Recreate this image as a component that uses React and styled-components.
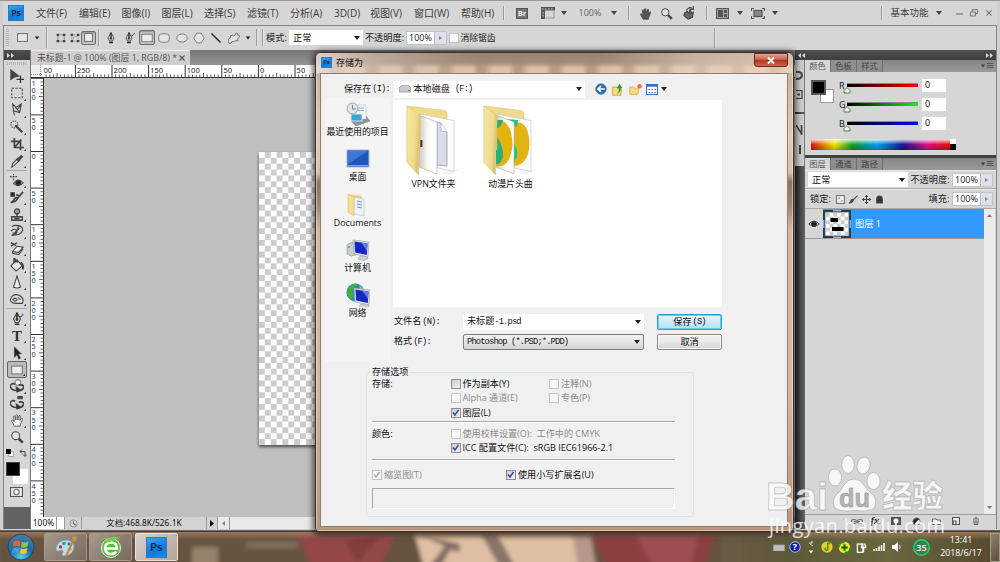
import styled, { createGlobalStyle } from 'styled-components';

const GlobalStyle = createGlobalStyle`
  * { box-sizing:border-box; }
  body {
    margin:0;
    overflow:hidden;
    font-family:"Open Sans", "Noto Sans CJK SC", sans-serif;
    font-size:10px;
    line-height:12px;
    color:#222;
    cursor:default;
  }
  svg { display:block; flex:none; }
`;

//----------------------SHARED-----------------
const Desktop = styled.div`
  position:relative;
  display:flex;
  flex-direction:column;
  width:1000px;
  height:562px;
  overflow:hidden;
  background:#5d4f43;
`;

const Cell = styled.div`
  display:flex;
  flex:none;
  align-items:center;
  justify-content:${props=>props.$left ? 'flex-start' : 'center'};
  width:${props=>props.$w}px;
  white-space:nowrap;
`;

const Fill = styled.div`
  flex:1;
`;

const Sep = styled.div`
  flex:none;
  width:2px;
  height:${props=>props.$h || 14}px;
  border-left:1px solid #9a9a9a;
  border-right:1px solid #e6e6e6;
`;

const Tri = styled.i`
  flex:none;
  width:0;
  height:0;
  border:3px solid transparent;
  border-top:4px solid ${props=>props.$c || '#222'};
  border-bottom:0;
`;

const PsBadge = styled.div`
  display:flex;
  flex:none;
  align-items:center;
  justify-content:center;
  width:${props=>props.$s}px;
  height:${props=>props.$s}px;
  font-size:${props=>props.$s * 0.55}px;
  font-weight:600;
  line-height:1;
  color:#06213f;
  background:linear-gradient(160deg, #3aa5f0, #0f79d8 60%, #1c8ceb);
  border:1px solid #2a7cc2;
`;

//----------------------APP WINDOW-----------------
const AppWindow = styled.div`
  display:flex;
  flex-direction:column;
  height:531px;
  padding:0 3px 1px 3px;
  background:#d0d0d0;
  border-top:1px solid #9c9896;
  border-bottom:1px solid #6a6a6a;
`;

const MenuBar = styled.div`
  display:flex;
  flex:none;
  align-items:center;
  height:24px;
  padding-left:5px;
  background:#d6d6d6;
  color:#3c3c3c;
`;

const OptionsBar = styled.div`
  display:flex;
  flex:none;
  align-items:center;
  height:25px;
  background:#d6d6d6;
  border:1px solid #858585;
  border-bottom:0;
  padding:0 0 1px 2px;
  font-size:9.2px;
`;

const Grip = styled.div`
  flex:none;
  width:${props=>props.$w}px;
  height:${props=>props.$h}px;
  background:repeating-linear-gradient(${props=>props.$dir}, #b4b4b4 0 1px, #d6d6d6 1px 2px);
`;

const Pressed = styled.div`
  display:flex;
  align-items:center;
  justify-content:center;
  width:${props=>props.$w}px;
  height:${props=>props.$h}px;
  background:#c3c3c3;
  border:1px solid #6d6d6d;
  border-radius:2px;
  box-shadow:inset 0 1px 1px #999;
`;

const Select = styled.div`
  display:flex;
  flex:none;
  align-items:center;
  justify-content:space-between;
  width:${props=>props.$w}px;
  height:${props=>props.$h || 15}px;
  padding:0 3px 0 4px;
  background:#fff;
  color:#111;
  white-space:nowrap;
`;

const Spin = styled.div`
  display:flex;
  flex:none;
  align-items:center;
  width:41px;
  height:14px;
  background:#fff;
  border:1px solid #c2c2c8;
  padding-left:2px;
  font-size:9px;
`;

const SpinArrow = styled.div`
  display:flex;
  align-items:center;
  justify-content:center;
  width:12px;
  height:12px;
  margin-left:auto;
  background:#dfe0e8;
  border-left:1px solid #b8b8c4;
  &::after {
    content:'';
    border:2px solid transparent;
    border-left:3px solid #6f86b8;
    border-right:0;
  }
`;

const Workspace = styled.div`
  display:flex;
  flex:1;
  min-height:0;
  border-left:1px solid #858585;
  border-right:1px solid #858585;
`;

//----------------------TOOLBOX-----------------
const Toolbox = styled.div`
  display:flex;
  flex-direction:column;
  flex:none;
  width:27px;
  background:#636363;
  border-right:1px solid #777;
`;

const DarkHead = styled.div`
  display:flex;
  flex:none;
  align-items:center;
  justify-content:${props=>props.$end ? 'flex-end' : 'flex-start'};
  height:10px;
  padding:0 3px;
  background:linear-gradient(#4e4e4e, #3e3e3e);
`;

const ToolList = styled.div`
  display:flex;
  flex-direction:column;
  align-items:center;
  height:447px;
  padding:2px 1px 0 0;
  background:#d6d6d6;
`;

const Tool = styled.div`
  position:relative;
  display:flex;
  flex:none;
  align-items:center;
  justify-content:center;
  width:20px;
  height:16.9px;
  ${props=>props.$more && `
    &::after {
      content:'';
      position:absolute;
      right:1px;
      bottom:1px;
      border:1.5px solid transparent;
      border-right-color:#111;
      border-bottom-color:#111;
    }
  `}
  ${props=>props.$on && `
    background:#bcbcbc;
    border:1px solid #666;
    border-radius:2px;
  `}
`;

const ToolRule = styled.div`
  flex:none;
  width:20px;
  height:1px;
  margin:1px 0;
  background:#aaa;
`;

//----------------------DOCUMENT-----------------
const DocArea = styled.div`
  display:flex;
  flex-direction:column;
  width:764px;
  flex:none;
`;

const TabStrip = styled.div`
  display:flex;
  flex:none;
  height:15px;
  background:linear-gradient(#767676, #949494);
`;

const DocTab = styled.div`
  display:flex;
  align-items:center;
  justify-content:space-between;
  width:159px;
  padding:0 5px 0 6px;
  font-size:8.9px;
  color:#555;
  background:#cfcfcf;
  border-top:1px solid #eee;
  white-space:nowrap;
`;

const DocBody = styled.div`
  display:flex;
  flex:1;
  min-height:0;
`;

const Canvas = styled.div`
  flex:1;
  padding:74px 0 0 214.5px;
  background:#bfbfbf;
`;

const Page = styled.div`
  width:400px;
  height:293px;
  background:repeating-conic-gradient(#ccc 0 25%, #fff 0 50%) 0 0 / 11.72px 11.72px;
  box-shadow:0 2px 3px rgba(0,0,0,.6);
`;

const StatusBar = styled.div`
  display:flex;
  flex:none;
  align-items:center;
  height:12px;
  background:#d2d2d2;
  font-family:"Noto Sans", "Noto Sans CJK SC", sans-serif;
  font-size:8.4px;
  color:#111;
`;

const StatusBox = styled.div`
  display:flex;
  align-items:center;
  justify-content:center;
  width:${props=>props.$w}px;
  height:12px;
  background:${props=>props.$bg || '#d2d2d2'};
  border-right:1px solid #999;
  white-space:nowrap;
`;

//----------------------RIGHT PANELS-----------------
const Dock = styled.div`
  display:flex;
  flex-direction:column;
  flex:none;
  width:10px;
  background:linear-gradient(90deg, #2c2c2c, #636363);
`;

const DockIcons = styled.div`
  display:flex;
  flex-direction:column;
  gap:10px;
  height:52px;
  margin-bottom:2px;
  padding:11px 0 0 1px;
  background:#cdcdcd;
  border-right:1px solid #777;
  overflow:hidden;
`;

const Panels = styled.div`
  display:flex;
  flex-direction:column;
  width:191px;
  font-size:9.2px;
  background:#d6d6d6;
`;

const PanelTabs = styled.div`
  display:flex;
  flex:none;
  align-items:stretch;
  height:12px;
  background:linear-gradient(#858585, #9a9a9a);
`;

const PanelTab = styled.div`
  display:flex;
  align-items:center;
  justify-content:center;
  width:26px;
  font-size:8.2px;
  color:${props=>props.$on ? '#555' : '#444'};
  background:${props=>props.$on ? '#d6d6d6' : '#8f8f8f'};
  border-right:1px solid #6f6f6f;
`;

const PanelMenu = styled.div`
  display:flex;
  align-items:center;
  gap:1px;
  margin-left:auto;
  padding-right:3px;
`;

const ColorBody = styled.div`
  display:flex;
  flex-direction:column;
  height:83px;
  padding:6px 0 0 6px;
`;

const ColorTop = styled.div`
  display:flex;
  height:61px;
`;

const SwatchPair = styled.div`
  position:relative;
  flex:none;
  width:${props=>props.$w}px;
  height:26px;
`;

const Swatch = styled.div`
  position:absolute;
  left:${props=>props.$x}px;
  top:${props=>props.$y}px;
  width:${props=>props.$s}px;
  height:${props=>props.$s}px;
  background:${props=>props.$c};
  border:${props=>props.$b};
`;

const ColorRows = styled.div`
  display:flex;
  flex-direction:column;
  gap:4px;
`;

const ColorRow = styled.div`
  display:flex;
  align-items:center;
  height:15px;
  font-family:"Noto Sans", sans-serif;
  font-size:9px;
`;

const Track = styled.div`
  position:relative;
  width:71px;
  height:4px;
  margin:-2px 3px 0 -1px;
  background:linear-gradient(90deg, #000, ${props=>props.$c});
  border-top:1px solid #888;
`;

const Thumb = styled.svg`
  position:absolute;
  left:-4px;
  top:3px;
`;

const ValueBox = styled.div`
  width:26px;
  height:15px;
  padding-left:3px;
  background:#fff;
  border:1px solid #d8d8e0;
`;

const SpectrumRow = styled.div`
  display:flex;
  height:11px;
`;

const Spectrum = styled.div`
  width:139px;
  background:
    linear-gradient(rgba(255,255,255,.85), rgba(255,255,255,0) 50%, rgba(0,0,0,.25)),
    linear-gradient(90deg, #e01010, #f5e800 17%, #10a030 30%, #00a0e8 48%, #1a1a90 66%, #e0107c 84%, #e01010);
`;

const SpectrumEnd = styled.div`
  width:6px;
  background:linear-gradient(#fff 50%, #000 50%);
`;

const DarkGap = styled.div`
  flex:none;
  height:3px;
  background:#3f4440;
`;

const LayerRow = styled.div`
  display:flex;
  flex:none;
  align-items:center;
  height:${props=>props.$h}px;
  padding:0 3px;
  border-bottom:1px solid #a9a9a9;
  border-top:1px solid #e8e8e8;
`;

const LayerArea = styled.div`
  display:flex;
  flex:1;
  min-height:0;
`;

const LayerItem = styled.div`
  display:flex;
  align-items:center;
  width:179px;
  height:30px;
  border-bottom:1px solid #999;
`;

const LayerName = styled.div`
  display:flex;
  align-items:center;
  gap:4px;
  flex:1;
  height:29px;
  color:#fff;
  background:#3399ff;
`;

const LayerScroll = styled.div`
  display:flex;
  flex-direction:column;
  align-items:center;
  justify-content:space-between;
  width:11px;
  padding:5px 0;
  background:#ececee;
`;

const LayerFoot = styled.div`
  display:flex;
  flex:none;
  align-items:flex-start;
  height:15px;
  padding:1px 0 0 42px;
  border-top:1px solid #999;
  ${Cell} { height:10px; }
`;

//----------------------DIALOG-----------------
const Dialog = styled.div`
  position:absolute;
  left:315px;
  top:52px;
  width:479px;
  height:480px;
  padding:0 5px 4px 4px;
  background:linear-gradient(#c9ab94, #e3c9b6 18%, #dcbfa8 25%, #8b7463 27%, #a08872 32%, #d9b79c 37%, #d9b79c 70%, #b9967a);
  border:1px solid #3a3230;
  border-radius:6px 6px 4px 4px;
  box-shadow:0 1px 6px 2px rgba(0,0,0,.65), inset 0 0 0 1px rgba(255,240,230,.45);
`;

const TitleBar = styled.div`
  display:flex;
  flex:none;
  align-items:center;
  height:20px;
  margin:0 -4px;
  padding:0 4px 1px 5px;
  font-size:9px;
  color:#111;
  border-radius:5px 5px 0 0;
  background:
    linear-gradient(90deg, rgba(232,222,214,.85), rgba(220,205,192,.5) 12%, rgba(160,140,124,0) 32%, rgba(160,140,124,0) 60%, rgba(235,215,200,.55) 80%, rgba(240,215,195,.7)),
    linear-gradient(rgba(150,130,115,1), rgba(160,138,120,.95) 50%, rgba(160,138,120,0) 75%),
    repeating-linear-gradient(90deg, #dcc0a8 0 10px, #b89c86 16px 22px, #dcc0a8 30px 36.6px);
`;

const TitleText = styled.span`
  margin-left:3px;
  padding:0 4px 0 1px;
`;

const CloseButton = styled.div`
  display:flex;
  align-items:center;
  justify-content:center;
  width:34px;
  height:14px;
  margin:-5px 0 0 auto;
  background:linear-gradient(#dda596, #cf6350 45%, #b2301e 50%, #d0664e);
  border:1px solid #6d2a20;
  border-radius:0 0 3px 3px;
`;

const DialogBody = styled.div`
  display:flex;
  flex-direction:column;
  height:454px;
  padding:6px 4px 0 4px;
  background:#f0f0f0;
  border:1px solid #8d7c70;
  font-size:9.1px;
  color:#111;
`;

const LookIn = styled.div`
  display:flex;
  align-items:center;
  height:18px;
`;

const Latin = styled.span`
  margin-left:${props=>props.$gap || 0}px;
  font-family:"Liberation Mono", monospace;
  font-size:8.8px;
  letter-spacing:-.88px;
`;

const Browser = styled.div`
  display:flex;
  gap:3px;
  height:264px;
`;

const Places = styled.div`
  display:flex;
  flex-direction:column;
  width:65px;
  padding-top:4px;
  background:#f4f4f4;
`;

const Place = styled.div`
  display:flex;
  flex-direction:column;
  align-items:center;
  height:45.3px;
  font-size:8.9px;
  white-space:nowrap;
`;

const FileSide = styled.div`
  display:flex;
  flex-direction:column;
`;

const FileList = styled.div`
  display:flex;
  width:329px;
  height:207px;
  margin-top:2px;
  padding:5px 0 0 2px;
  background:#fff;
`;

const Folder = styled.div`
  display:flex;
  flex-direction:column;
  align-items:center;
  width:77px;
  font-size:8.9px;
  svg { margin-bottom:-1px; }
`;

const NameForm = styled.div`
  display:grid;
  grid-template-columns:69px 181px 13px 65px;
  grid-template-rows:17px 17px;
  row-gap:3px;
  margin-top:6px;
  align-items:center;
  padding-left:1px;
`;

const FormatSelect = styled(Select)`
  padding-left:3px;
  background:linear-gradient(#f2f2f2, #e4e4e4 50%, #d3d3d3);
  border:1px solid #7d7d7d;
  border-radius:2px;
`;

const Button = styled.div`
  display:flex;
  align-items:center;
  justify-content:center;
  height:16px;
  grid-column:4;
  border:1px solid ${props=>props.$main ? '#2f9fd0' : '#888'};
  border-radius:2px;
  background:${props=>props.$main ? 'linear-gradient(#e9f6fc, #cdeaf8 50%, #b4def3)' : 'linear-gradient(#f3f3f3, #e8e8e8 50%, #d2d2d2)'};
  box-shadow:${props=>props.$main ? 'inset 0 0 0 1px #5fd0f5' : 'inset 0 0 0 1px #f8f8f8'};
`;

const Options = styled.fieldset`
  display:flex;
  flex-direction:column;
  width:328px;
  height:151px;
  margin:4px 0 0 41px;
  padding:0 18px 0 5px;
  border:1px solid #dbe4ea;
  border-radius:3px;
`;

const Legend = styled.legend`
  margin-left:-1px;
  padding:0 1px;
`;

const OptionLine = styled.div`
  display:grid;
  grid-template-columns:${props=>props.$cols || '78.5px 98.5px 1fr'};
  align-items:center;
  height:14.3px;
  margin-top:${props=>props.$first ? -1 : 0}px;
`;

const OptionRule = styled.div`
  height:2px;
  margin:${props=>props.$m};
  border-top:1px solid #a8a8a8;
  border-bottom:1px solid #fff;
`;

const CheckLabel = styled.div`
  display:flex;
  align-items:center;
  gap:2px;
  white-space:nowrap;
  color:${props=>props.$off ? '#8b8b8b' : '#111'};
`;

const Box = styled.span`
  display:flex;
  flex:none;
  align-items:center;
  justify-content:center;
  width:10px;
  height:10px;
  background:${props=>props.$off ? '#f6f6f6' : 'linear-gradient(135deg, #c8ccd4, #f4f4f6)'};
  border:1px solid ${props=>props.$off ? '#c4c4c4' : '#8e8f8f'};
`;

const Preview = styled.div`
  height:21px;
  margin-top:6px;
  border:1px solid #a8a8a8;
  border-right-color:#fff;
  border-bottom-color:#fff;
`;

//----------------------TASKBAR-----------------
const Taskbar = styled.div`
  position:relative;
  display:flex;
  flex:1;
  align-items:center;
  overflow:hidden;
  border-top:1px solid #4a3c34;
  background:#6a5747;
`;

const Wallpaper = styled.svg`
  position:absolute;
  left:0;
  top:0;
`;

const TaskItems = styled.div`
  position:relative;
  display:flex;
  flex:1;
  align-items:center;
`;

const TaskButton = styled.div`
  display:flex;
  flex:none;
  align-items:center;
  justify-content:center;
  width:43px;
  height:28px;
  margin-right:2.4px;
  border:1px solid ${props=>props.$on ? '#e8e2dc' : '#a89a8e'};
  border-radius:2px;
  background:${props=>props.$on ? 'linear-gradient(135deg, #d8d2cc, #b0a498)' : 'linear-gradient(135deg, #a59a8f, #78695b)'};
`;

const Clock = styled.div`
  width:46px;
  font-size:8.8px;
  line-height:13px;
  text-align:center;
  color:#fff;
`;

const ShowDesktop = styled.div`
  width:10px;
  height:29px;
  margin-left:6px;
  border:1px solid #a59a88;
  background:linear-gradient(135deg, #8e826f, #5a4d3a);
`;

const Watermark = styled.svg`
  position:absolute;
  left:762px;
  top:450px;
`;

//----------------------ICONS-----------------
const Icon = ({ s=14, w, h, box="0 0 16 16", children }) => (
  <svg width={w || s} height={h || s} viewBox={box} fill="none" stroke="#444" strokeWidth="1.2">
    {children}
  </svg>
);

const Pen = () => <><path d="M8 .5 L4 8 L6 12 H10 L12 8 Z" fill="#ddd"/><path d="M8 1 V8 M5.500 14 H10.500" stroke="#222" strokeWidth="1.800"/><circle cx="8" cy="8.500" r="1.200" fill="#222"/></>;
const Hand = ({ fill="#f2f2f2" }) => <path d="M5 15 L2 9.500 Q1.500 8 3 8.200 L5 10 L4 4 Q4.500 2.500 5.700 4 L6.800 8 V2.500 Q7.500 1 8.500 2.500 L9 8 L10.300 3.200 Q11.500 2.200 11.900 3.500 L11.300 8.500 L13 6 Q14.500 5.500 14.300 7 L12 13 L11.500 15 Z" fill={fill} strokeWidth=".9"/>;
const Zoomer = () => <><circle cx="6.500" cy="6.500" r="4.500" fill="#e4e4e4"/><path d="M10 10 L14.500 14.500" strokeWidth="3"/></>;
const Orbit = () => <><path d="M0 8 Q2 4 6 6 M0 8 Q2 14 9 13 M16 9 Q15 6 10 7 M16 9 Q15 12 12 13" strokeWidth="1.900"/><path d="M7 9 L13 13 L8 15 Z" fill="#333"/></>;

const tools = [
  [
    [<><path d="M1 1 V12 L4.500 9.500 L10 8 Z" fill="#444"/><path d="M12 7.500 V16 M7.500 11.800 H16" stroke="#333" strokeWidth="1.500"/></>, false],
    [<rect x="2" y="2.500" width="12" height="11" strokeDasharray="2.500 1.700"/>, true],
    [<path d="M3 1 L7 5 L13 1 L11 11 L4 9 Z M4 9 L5 14 M6 5 L11 10 M13 1 L8 8"/>, true],
    [<><circle cx="5" cy="5" r="4" strokeDasharray="1.500 1.200"/><path d="M6 6 L14 14" strokeWidth="2.600"/></>, true],
    [<path d="M5 1 V12 H16 M1 5 H12 V15 M5 12 L13 3" strokeWidth="1.900"/>, true],
    [<><path d="M2 15 L3 11 L8 6 L10 8 L5 13 Z" fill="#eee"/><path d="M8 5 L11 8 M9.500 6.500 L14 2" strokeWidth="3.400"/></>, true],
  ],
  [
    [<><path d="M0 3 H9 M4 -1 V8" strokeDasharray="2 1"/><path d="M4 11 Q9 4 15 10 Q10 16 4 11 Z" fill="#ddd"/><circle cx="9.500" cy="10" r="3" fill="#222"/></>, true],
    [<><rect x="1" y="2" width="4" height="4" fill="#222"/><path d="M15 1 L8 9 M9 8 Q7 13 1 13 Q5 11 5 9 Q7 7 9 8 M11 6 L7 4" strokeWidth="1.900"/></>, true],
    [<><circle cx="8" cy="4" r="3" fill="#999"/><path d="M8 6 V10 M2 14 V10 H14 V14 Z M5 12 H11" fill="#ccc" strokeWidth="1.600"/></>, true],
    [<path d="M2 3 Q6 0 13 3 Q17 8 10 12 L2 13 Q8 10 10 2 M1 8 Q6 4 8 8 Q8 13 3 10 M11 5 L6 9" strokeWidth="1.300"/>, true],
    [<><path d="M1 2 L7 5 M1 6 L8 2" strokeWidth="1.600"/><path d="M3 12 L8 6 L15 7 L10 13 Z" fill="#eee"/><path d="M3 12 V14 L10 15.500 L15 9"/></>, true],
    [<><path d="M1 9 L8 2 L14 9 L7 15 Z" fill="#e4e4e4"/><path d="M5 6 V1 L9 5 M12 5 Q16 8 14.500 13" strokeWidth="2.400"/></>, true],
    [<path d="M8 1 L4 14 Q8 15.500 12 14 Z" fill="#ececec"/>, true],
    [<><path d="M1 7 Q4 1 11 4 Q17 8 14 13 H6 Q-1 12 1 7 Z" fill="#ddd"/><path d="M3 9 Q6 5 8 9 Q5 12 4 9 M9 6 L12 9"/></>, true],
  ],
  [
    [<><Pen/><path d="M10 5 Q13 7 15 2"/></>, true],
    [<text x="8" y="14" textAnchor="middle" fontFamily="Liberation Serif, serif" fontSize="17" fontWeight="700" fill="#333" stroke="none">T</text>, true],
    [<path d="M5 1 V13 L8 10 L10 15 L12 14 L9.500 9 H13 Z" fill="#222" strokeWidth=".7"/>, true],
    [<rect x="2" y="3.500" width="12" height="9" fill="#ececec" stroke="#777"/>, true, true],
    [<><circle cx="9" cy="4" r="3.300" fill="#eee" stroke="#888"/><Orbit/></>, true],
    [<><rect x="9" y="0" width="5" height="3" fill="#444"/><Orbit/></>, true],
    [<Hand/>, true],
    [<Zoomer/>, false],
  ],
];

const shapes = [
  [14, <Pen/>],
  [21, <><Pen/><path d="M11 4 Q13 7 15.500 1"/></>],
  [16, <rect x="1" y="3" width="14" height="10" fill="#ececec" stroke="#777"/>, true],
  [18, <rect x="1" y="2.500" width="14" height="11" rx="3.500" fill="#e4e4e4" stroke="#777"/>],
  [17, <ellipse cx="8" cy="8" rx="7" ry="5.500" fill="#e4e4e4" stroke="#777"/>],
  [17, <path d="M5 1.500 H11 L15 8 L11 14.500 H5 L1 8 Z" fill="#e4e4e4" stroke="#777"/>],
  [18, <path d="M2 2 L14 14" stroke="#222" strokeWidth="1.800"/>],
  [18, <path d="M1 15 Q-1 9 3 8 Q2 4 6 4 Q8 8 10 2 Q13 0 13 4 Q17 4 15 7 Q12 8 13 12 Q9 10 8 13 Q5 11 4 15 Z" fill="#e0e0e0" stroke="#666"/>],
];

const menus = [
  [43, '文件(F)'], [42.5, '编辑(E)'], [40, '图像(I)'], [42.5, '图层(L)'], [43, '选择(S)'], [43, '滤镜(T)'],
  [44, '分析(A)'], [36, '3D(D)'], [44, '视图(V)'], [47, '窗口(W)'], [42, '帮助(H)'],
];

const Chevrons = ({ back }) => (
  <Icon w={7} h={5} box="0 0 7 5">
    <path d={back ? "M3 0 L0 2.500 L3 5 Z M7 0 L4 2.500 L7 5 Z" : "M0 0 L3 2.500 L0 5 Z M4 0 L7 2.500 L4 5 Z"} fill="#ddd" stroke="none"/>
  </Icon>
);

const SmallTri = styled(Tri)`
  transform:scale(.75);
`;

const BurgerMenu = () => (
  <PanelMenu>
    <SmallTri $c="#444"/>
    <Icon w={6} h={6} box="0 0 6 6"><path d="M0 .5 H6 M0 2.500 H6 M0 4.500 H6" stroke="#555" strokeWidth="1"/></Icon>
  </PanelMenu>
);

const Eye = () => <Icon s={12}><path d="M1 8 Q8 0 15 8 Q8 14 1 8 Z" fill="#ddd"/><circle cx="8" cy="8" r="3.500" fill="#222"/></Icon>;

//----------------------RULERS-----------------
const STEP = 36.6;

const TopRuler = () => {
  const labels = ['250', '200', '150', '100', '50', '0', '50'];
  const ticks = [];
  for (let i = -9; i < 76; i++) {
    const x = 44.400 + i * STEP / 10;
    ticks.push(<path key={i} d={`M${x} ${i % 10 === 0 ? 0 : i % 5 === 0 ? 8 : 9.500} V12`} stroke="#333" strokeWidth={i % 10 === 0 ? 1 : .8}/>);
  }
  return (
    <svg width="764" height="13" fontFamily="Noto Sans, sans-serif" fontSize="7.500" fill="#222">
      <rect width="764" height="13" fill="#fff"/>
      {ticks}
      <text x="12.500" y="7.500">00</text>
      {labels.map((t, i) => <text key={i} x={46 + i * STEP} y="7.500">{t}</text>)}
      <path d="M0 12.500 H764" stroke="#333"/>
      <rect width="12" height="12" fill="#eee"/>
      <path d="M0 9.500 H12 M9.500 0 V12" stroke="#888" strokeDasharray="1 1"/>
    </svg>
  );
};

const SideRuler = () => {
  const labels = ['100', '50', '0', '50', '100', '150', '200', '250', '300', '350', '400', '450'];
  const ticks = [];
  for (let i = 0; i < 121; i++) {
    const y = .3 + i * STEP / 10;
    ticks.push(<path key={i} d={`M${i % 10 === 0 ? 0 : i % 5 === 0 ? 8 : 9.500} ${y} H12`} stroke="#333" strokeWidth={i % 10 === 0 ? 1 : .8}/>);
  }
  return (
    <svg width="13" height="439" fontFamily="Noto Sans, sans-serif" fontSize="7.300" fill="#246">
      <rect width="13" height="439" fill="#fff"/>
      {ticks}
      {labels.map((t, i) => t.split('').map((d, j) => (
        <text key={`${i}-${j}`} x=".6" y={8 + i * STEP + j * 7.200}>{d}</text>
      )))}
      <path d="M12.500 0 V439" stroke="#333"/>
    </svg>
  );
};

//----------------------DIALOG PARTS-----------------
const FolderIcon = ({ fruit }) => (
  <svg width="56" height="74" viewBox="0 0 56 74">
    <defs>
      <linearGradient id="flap" x1="0" x2="1" y1="0" y2=".3">
        <stop offset="0" stopColor="#f8e7a6"/><stop offset=".7" stopColor="#f1db8c"/><stop offset="1" stopColor="#dcc270"/>
      </linearGradient>
      <linearGradient id="sheet" x1="0" x2="1">
        <stop offset="0" stopColor="#cfc8bc"/><stop offset=".5" stopColor="#fbfaf8"/><stop offset="1" stopColor="#fff"/>
      </linearGradient>
    </defs>
    <path d="M36 68 L55 63 L44 70 Z" fill="#f1f1f1"/>
    <path d="M1 1 L38 5.500 Q41 6 41 9 V30 H14 Z" fill="#efd98a" stroke="#dcc474" strokeWidth=".6"/>
    <path d="M14 9 L48 15.500 V66.500 L32 63 Z" fill="#fdfdfd" stroke="#c4c4c4" strokeWidth=".7"/>
    {fruit ? <>
      <path d="M31 18 Q46 14 46.500 40 Q45 60 31 61 Z" fill="#e3b410"/>
      <path d="M22 14 L35 15 L34 22 Z M31 39 Q38 48 31 57 Z" fill="#1fc47b"/>
    </> : <>
      <path d="M31 17 L35 18 L41 27 V61 L31 60 Z" fill="#d9deea" stroke="#9a9a9a" strokeWidth=".8"/>
      <path d="M35 18 V26 L41 27" fill="#fff" stroke="#9a9a9a" strokeWidth=".6"/>
    </>}
    <path d="M13 10 L31 17 V69 L13 62 Z" fill="url(#sheet)" stroke="#b5b5b5" strokeWidth=".7"/>
    {fruit ? <>
      <path d="M13 15 Q29 14 29.500 40 Q27 64 13 61 Z" fill="#e3b410"/>
      <path d="M13 15 H20 Q19 22 13 24 Z M13 30 Q21 42 20 52 Q18 60 13 59 Z" fill="#2fae72"/>
    </> : <path d="M14 35 H16.500 V42 H14 Z" fill="#642c5c"/>}
    <path d="M.8 1 L14 10 V44 L12.500 46 V70 L.8 57 Z" fill="url(#flap)" stroke="#d9c27a" strokeWidth=".6"/>
  </svg>
);

const Monitor = ({ x=0, y=0 }) => (
  <g transform={`translate(${x} ${y})`}>
    <path d="M7 16 L14 16 L15 19 Q10 22 5 19 Z" fill="#cfd3d6" stroke="#999" strokeWidth=".5"/>
    <path d="M0 0 L16 2 L15 17 L1 14 Z" fill="#dfe3e8" stroke="#999" strokeWidth=".6"/>
    <path d="M1.500 1.500 L14.500 3.500 L13.800 15 L2.200 12.500 Z" fill="#1428c8"/>
    <path d="M8 2.500 L14.500 3.500 L14 11 Z" fill="#5c7cf0"/>
  </g>
);

const places = [
  ['最近使用的项目', <>
    <path d="M5 19 L20 14 L24 19 L10 24 Z" fill="#8d9499" stroke="#7f888d" strokeWidth=".6"/>
    <rect x="7" y="3" width="13" height="14" fill="#f3f6f8" stroke="#b1bbc4" strokeWidth=".6"/>
    <path d="M12 6 H18 M12 8.500 H18" stroke="#6f9cc8" strokeWidth=".8"/>
    <rect x="5" y="12" width="11" height="7" fill="#3ba5d5" stroke="#eee" strokeWidth=".8"/>
    <circle cx="6.500" cy="6.500" r="5.500" fill="#dbe6ee" stroke="#98a6b0"/><path d="M6.500 3 V7 H10" stroke="#667" fill="none" strokeWidth=".8"/>
  </>],
  ['桌面', <>
    <rect x="1" y="3" width="22" height="17" fill="#1f56b8" stroke="#a9bad0"/>
    <path d="M2 4 H22 L2 17 Z" fill="#3f76d8"/><path d="M2 18.500 H22" stroke="#7fa6d8"/>
  </>],
  ['Documents', <>
    <path d="M2 1 L16 3 V20 H7 Z" fill="#ecd47a"/><path d="M8 4 L18 6 V23 L8 21 Z" fill="#eef3f8" stroke="#b5bcc4" strokeWidth=".6"/>
    <path d="M11 8 L16 9 M11 11 L16 12 M11 14 L16 15" stroke="#6b94bd"/>
    <path d="M2 1 L8 4 V23 L2 19 Z" fill="#f3df93" stroke="#d6bf6c" strokeWidth=".6"/>
  </>],
  ['计算机', <><path d="M1 7 L6 4 L10 6 V17 L5 18 L1 16 Z" fill="#c8ccd0" stroke="#8c9298" strokeWidth=".6"/><path d="M3 8 V10" stroke="#2c2" strokeWidth="1.500"/><Monitor x={7} y={2}/></>],
  ['网络', <><circle cx="9.500" cy="9.500" r="9" fill="#2b80cf"/><path d="M2 5 Q6 0 12 1 Q9 5 6 7 Q9 10 7 14 Q5 18 4 16 Q-1 11 2 5 Z" fill="#3fae3a"/><path d="M13 2 Q18 5 18 9 L14 6 Z" fill="#7bd04d"/><Monitor x={8} y={5}/></>],
];

const Check = ({ on, off, children }) => (
  <CheckLabel $off={off}>
    <Box $off={off}>
      {on && <Icon s={8} box="0 0 8 8"><path d="M1 3.500 L3 6 L6.500 .8" stroke={off ? '#aaa' : '#2d49a0'} strokeWidth="1.500"/></Icon>}
    </Box>
    {children}
  </CheckLabel>
);

const LookLabel = styled(Cell)`
  padding-left:19px;
`;

const SaveDialog = () => (
  <Dialog>
    <TitleBar>
      <PsBadge $s={11}>Ps</PsBadge>
      <TitleText>存储为</TitleText>
      <CloseButton>
        <Icon w={8} h={7} box="0 0 8 7"><path d="M1 .5 L7 6.500 M7 .5 L1 6.500" stroke="#fff" strokeWidth="2"/></Icon>
      </CloseButton>
    </TitleBar>
    <DialogBody>
      <LookIn>
        <LookLabel $w={68.500} $left>保存在<Latin $gap={1}>(I):</Latin></LookLabel>
        <Select $w={191} $h={17}>
          <Cell $w={14}>
            <Icon w={12} h={8} box="0 0 12 8"><path d="M0 3 L3 0 H9 L12 3 V7 H0 Z" fill="#c9ccd0" stroke="#888" strokeWidth=".7"/><path d="M9 5.500 H11" stroke="#2b2"/></Icon>
          </Cell>
          <Cell $left $w={160}>本地磁盘<Latin $gap={5}>(F:)</Latin></Cell>
          <Tri/>
        </Select>
        <Cell $w={9}/>
        <Cell $w={15}><Icon s={12}><circle cx="8" cy="8" r="7" fill="#2470b5" stroke="#5a7c9c"/><path d="M13 8 H4 M8 4 L4 8 L8 12" stroke="#fff" strokeWidth="2.200"/></Icon></Cell>
        <Cell $w={18}><Icon s={13}><path d="M2 5 H7 L8 7 H13 L12 15 H2 Z" fill="#f3dc84" stroke="#c9a94a"/><path d="M6 13 Q11 11 9.500 6 H7 L10.500 1 L14 6 H12 Q13 12 6 13 Z" fill="#2f9e34" stroke="none"/></Icon></Cell>
        <Cell $w={17}><Icon s={13}><path d="M1 5 H6 L7 7 H12 L11 14 H1 Z" fill="#f3dc84" stroke="#d9bb5a"/><circle cx="13" cy="4" r="2.800" fill="#f07030" stroke="none"/></Icon></Cell>
        <Cell $w={17}><Icon w={12} h={11} box="0 0 12 11"><rect x=".5" y=".5" width="11" height="10" fill="#fff" stroke="#2c74c8"/><path d="M0 1.500 H12" stroke="#2c74c8" strokeWidth="2.500"/><path d="M2.500 5.500 H10 M2.500 8.500 H10" stroke="#47a" strokeDasharray="1.500 1.400"/></Icon></Cell>
        <Tri/>
      </LookIn>
      <Browser>
        <Places>
          {places.map(([name, art]) => (
            <Place key={name}>
              <svg width="24" height="24" viewBox="0 0 24 24">{art}</svg>
              {name}
            </Place>
          ))}
        </Places>
        <FileSide>
          <FileList>
            <Folder><FolderIcon/>VPN文件夹</Folder>
            <Folder><FolderIcon fruit/>动漫片头曲</Folder>
          </FileList>
          <NameForm>
            <span>文件名<Latin $gap={1}>(N):</Latin></span>
            <Select $w={181} $h={16}><span>未标题<Latin>-1.psd</Latin></span><Tri/></Select>
            <Button $main>保存<Latin $gap={1}>(S)</Latin></Button>
            <span>格式<Latin $gap={1}>(F):</Latin></span>
            <FormatSelect $w={181} $h={16}><Latin>Photoshop (*.PSD;*.PDD)</Latin><Tri/></FormatSelect>
            <Button>取消</Button>
          </NameForm>
        </FileSide>
      </Browser>
      <Options>
        <Legend>存储选项</Legend>
        <OptionLine $first><span>存储:</span><Check>作为副本(Y)</Check><Check off>注释(N)</Check></OptionLine>
        <OptionLine><span/><Check off>Alpha 通道(E)</Check><Check off>专色(P)</Check></OptionLine>
        <OptionLine><span/><Check on>图层(L)</Check></OptionLine>
        <OptionRule $m="1px 0 4px"/>
        <OptionLine><span>颜色:</span><Check off>使用校样设置(O):&nbsp; 工作中的 CMYK</Check></OptionLine>
        <OptionLine><span/><Check on>ICC 配置文件(C):&nbsp; sRGB IEC61966-2.1</Check></OptionLine>
        <OptionRule $m="3.500px 0 6.500px"/>
        <OptionLine $cols="134px 1fr"><Check on off>缩览图(T)</Check><Check on>使用小写扩展名(U)</Check></OptionLine>
        <Preview/>
      </Options>
    </DialogBody>
  </Dialog>
);

//----------------------BARS-----------------
const ZoomLevel = styled(Cell)`
  font-size:9px;
  color:#666;
`;

const TopMenu = () => (
  <MenuBar>
    <PsBadge $s={16}>Ps</PsBadge>
    <Cell $w={12}/>
    {menus.map(([w, name]) => <Cell key={name} $left $w={w}>{name}</Cell>)}
    <Sep/>
    <Cell $w={33}><Icon w={12} h={11} box="0 0 12 11"><rect x=".5" y=".5" width="11" height="10" fill="#777" stroke="#555"/><text x="6" y="8.300" textAnchor="middle" fontSize="7.500" fontWeight="700" fill="#eee" stroke="none">Br</text></Icon></Cell>
    <Cell $w={20}><Icon w={14} h={12} box="0 0 14 12"><path d="M0 0 H14 V3.500 H4 V12 H0 Z" fill="#555" stroke="none"/><path d="M4.500 3.500 H13 V11 H4.500" stroke="#999" strokeWidth="1"/><path d="M1 2 H13 M2 5 V11" stroke="#ddd" strokeDasharray="1.500 1.500" strokeWidth="1"/></Icon></Cell>
    <Cell $w={12}><Tri $c="#444"/></Cell>
    <ZoomLevel $w={40}>100%</ZoomLevel>
    <Cell $w={8}><Tri $c="#444"/></Cell>
    <Cell $w={10}/>
    <Sep/>
    <Cell $w={31}><Icon s={13}><Hand fill="#555"/></Icon></Cell>
    <Cell $w={11}><Icon s={13}><Zoomer/></Icon></Cell>
    <Cell $w={34}><Icon s={14}><path d="M3 8 L6 6 L8 9 L9 4 L11 8 L13 7 L12 13 L7 15 L2 11 Z" fill="#666"/><path d="M5 5 Q8 0 12 3 M13 0 V4 H9"/></Icon></Cell>
    <Sep/>
    <Cell $w={29}><Icon w={13} h={11} box="0 0 13 11"><rect x=".5" y=".5" width="12" height="10" fill="#aaa" stroke="#555"/><path d="M2 2 H7 V9 H2 Z M8 2 H11 V5 H8 Z M8 6 H11 V9 H8 Z" fill="#555" stroke="none"/></Icon></Cell>
    <Tri $c="#444"/>
    <Cell $w={29}><Icon w={14} h={11} box="0 0 14 11"><rect x="3" y="2.500" width="8" height="6" fill="#888" stroke="#555"/><path d="M.5 3 V.5 H3 M11 .5 H13.500 V3 M13.500 8 V10.500 H11 M3 10.500 H.5 V8" stroke="#555"/></Icon></Cell>
    <Tri $c="#444"/>
    <Fill/>
    <Sep/>
    <Cell $w={53} style={{ fontSize: 9.5 }}>基本功能</Cell>
    <Tri $c="#444"/>
    <Cell $w={9}/>
    <Cell $w={16}><Icon w={7} h={7} box="0 0 7 7"><path d="M0 4 H7" stroke="#777"/></Icon></Cell>
    <Cell $w={13}><Icon w={8} h={8} box="0 0 8 8"><path d="M2 2.500 V.7 H7.500 V4.500 H6 M.5 3 H5.500 V7 H.5 Z" stroke="#777" strokeWidth="1"/></Icon></Cell>
    <Cell $w={17}><Icon w={6} h={6} box="0 0 7 7"><path d="M.5 .5 L6.500 6.500 M6.500 .5 L.5 6.500" stroke="#777"/></Icon></Cell>
  </MenuBar>
);

const ToolOptions = () => (
  <OptionsBar>
    <Grip $w={3} $h={17} $dir="0deg"/>
    <Cell $w={26}><Icon w={11} h={9} box="0 0 11 9"><rect x=".5" y=".5" width="10" height="8" fill="#e6e6e6" stroke="#777"/></Icon></Cell>
    <Cell $w={4}><SmallTri/></Cell>
    <Cell $w={7}/>
    <Sep $h={21}/>
    <Cell $w={5}/>
    <Cell $w={15}><Icon s={10}><rect x="3" y="3" width="10" height="10" stroke="#777"/><path d="M1 3 H5 M11 3 H15 M1 13 H5 M11 13 H15" strokeWidth="3.500"/></Icon></Cell>
    <Cell $w={13}><Icon s={10}><path d="M3 3 H13 V13 H3 Z M5 10 Q5 5 11 6" stroke="#777" strokeDasharray="2 1"/><path d="M1 3 H5 M11 3 H15 M1 13 H5 M11 13 H15" strokeWidth="3.500"/></Icon></Cell>
    <Pressed $w={15} $h={14}><Icon s={9} box="0 0 9 9"><rect x=".5" y=".5" width="8" height="8" fill="#eee" stroke="#777"/></Icon></Pressed>
    <Cell $w={2}/>
    <Sep $h={17}/>
    <Cell $w={4}/>
    {shapes.map(([w, art, on], i) => (
      <Cell key={i} $w={w}>{on ? <Pressed $w={18} $h={15}><Icon s={12}>{art}</Icon></Pressed> : <Icon s={12}>{art}</Icon>}</Cell>
    ))}
    <Cell $w={9}><SmallTri/></Cell>
    <Cell $w={4}/>
    <Sep $h={17}/>
    <Cell $w={4}/>
    <Sep $h={17}/>
    <Cell $w={25}>模式:</Cell>
    <Select $w={74}>正常<Tri/></Select>
    <Cell $w={43}>不透明度:</Cell>
    <Spin>100%<SpinArrow/></Spin>
    <Cell $w={2}/>
    <Box $off/>
    <Cell $w={38} style={{ fontSize: 8.8 }}>消除锯齿</Cell>
    <Cell $w={217}/>
    <Sep $h={20}/>
  </OptionsBar>
);

const MiniRow = styled(Cell)`
  gap:5px;
  height:15px;
`;

const ToolBar = () => (
  <Toolbox>
    <DarkHead><Chevrons/></DarkHead>
    <ToolList>
      <Grip $w={20} $h={3} $dir="90deg"/>
      <Cell $w={20} style={{ height: 3 }}/>
      {tools.map((group, g) => (
        <div key={g}>
          {g > 0 && <ToolRule/>}
          {group.map(([art, more, on], i) => <Tool key={i} $more={more} $on={on}><Icon s={14}>{art}</Icon></Tool>)}
        </div>
      ))}
      <MiniRow $w={22}>
        <Icon s={8} box="0 0 8 8"><rect x="3" y="3" width="4.500" height="4.500" fill="#fff" stroke="#888" strokeWidth=".7"/><rect width="5" height="5" fill="#000" stroke="none"/></Icon>
        <Icon s={8} box="0 0 8 8"><path d="M1 2.500 H6 V7 M3 .5 L1 2.500 L3 4.500 M4 5.500 L6 7.500 L8 5.500" strokeWidth="1"/></Icon>
      </MiniRow>
      <SwatchPair $w={22}>
        <Swatch $x={7} $y={8} $s={15} $c="#fff" $b="0"/>
        <Swatch $x={0} $y={1} $s={14} $c="#000" $b="1px solid #444"/>
      </SwatchPair>
      <Icon w={13} h={10} box="0 0 13 10"><rect x=".5" y=".5" width="12" height="9" fill="#eee" stroke="#555"/><circle cx="6.500" cy="5" r="2.700" fill="#fff" stroke="#777"/></Icon>
    </ToolList>
  </Toolbox>
);

const Document = () => (
  <DocArea>
    <TabStrip>
      <DocTab>未标题-1 @ 100% (图层 1, RGB/8) *
        <Icon s={6} box="0 0 6 6"><path d="M.5 .5 L5.500 5.500 M5.500 .5 L.5 5.500" stroke="#555"/></Icon>
      </DocTab>
    </TabStrip>
    <TopRuler/>
    <DocBody>
      <SideRuler/>
      <Canvas><Page/></Canvas>
    </DocBody>
    <StatusBar>
      <StatusBox $w={26} $bg="#fff">100%</StatusBox>
      <StatusBox $w={8} $bg="#fff"/>
      <StatusBox $w={17}><Icon s={9}><circle cx="8" cy="8" r="6.500" stroke="#777"/><path d="M8 4 V8 L12 11" stroke="#777" strokeWidth="2"/></Icon></StatusBox>
      <StatusBox $w={125}>文档:468.8K/526.1K</StatusBox>
      <StatusBox $w={11}><Icon w={4} h={7} box="0 0 4 7"><path d="M0 0 L4 3.500 L0 7 Z" fill="#111" stroke="none"/></Icon></StatusBox>
      <StatusBox $w={12} $bg="#e9e9e9"><Icon w={3} h={5} box="0 0 3 5"><path d="M3 0 L0 2.500 L3 5 Z" fill="#888" stroke="none"/></Icon></StatusBox>
      <StatusBox $w={565} $bg="#e9e9e9"/>
    </StatusBar>
  </DocArea>
);

const ColorPanel = () => (
  <>
    <PanelTabs>
      <PanelTab $on>颜色</PanelTab><PanelTab>色板</PanelTab><PanelTab>样式</PanelTab>
      <BurgerMenu/>
    </PanelTabs>
    <ColorBody>
      <ColorTop>
        <SwatchPair $w={28}>
          <Swatch $x={9} $y={11} $s={14} $c="#fff" $b="1px solid #999"/>
          <Swatch $x={0} $y={2} $s={15} $c="#000" $b="2px solid #555"/>
        </SwatchPair>
        <ColorRows>
          {[['R', '#f00'], ['G', '#0f0'], ['B', '#00f']].map(([name, c]) => (
            <ColorRow key={name}>
              <Cell $w={9} $left>{name}</Cell>
              <Track $c={c}>
                <Thumb width="8" height="7" viewBox="0 0 8 7"><path d="M4 .5 L7 3.500 V6 H1 V3.500 Z" fill="#fff" stroke="#3c8a3c"/></Thumb>
              </Track>
              <ValueBox>0</ValueBox>
            </ColorRow>
          ))}
        </ColorRows>
      </ColorTop>
      <SpectrumRow><Spectrum/><SpectrumEnd/></SpectrumRow>
    </ColorBody>
  </>
);

const LayersPanel = () => (
  <>
    <PanelTabs>
      <PanelTab $on>图层</PanelTab><PanelTab>通道</PanelTab><PanelTab>路径</PanelTab>
      <BurgerMenu/>
    </PanelTabs>
    <LayerRow $h={19}>
      <Select $w={100}>正常<Tri/></Select>
      <Cell $w={44}>不透明度:</Cell>
      <Spin>100%<SpinArrow/></Spin>
    </LayerRow>
    <LayerRow $h={20}>
      <Cell $w={25}>锁定:</Cell>
      <Cell $w={14}><Icon s={9} box="0 0 9 9"><rect x=".5" y=".5" width="8" height="8" fill="#eee" stroke="#777"/><path d="M2 2 H4 V4 H2 Z M5 5 H7 V7 H5 Z" fill="#bbb" stroke="none"/></Icon></Cell>
      <Cell $w={13}><Icon s={9}><path d="M15 1 L7 9 M8 8 Q6 14 1 14 Q4 12 4 9 Q6 7 8 8" fill="#555" strokeWidth="2"/></Icon></Cell>
      <Cell $w={13}><Icon s={9} box="0 0 9 9"><path d="M4.500 0 V9 M0 4.500 H9 M3 1.500 H6 M3 7.500 H6 M1.500 3 V6 M7.500 3 V6" strokeWidth="1"/></Icon></Cell>
      <Cell $w={13}><Icon s={9}><path d="M3 8 Q3 2 8 2 Q13 2 13 8 V14 H3 Z" fill="#333" strokeWidth="2"/></Icon></Cell>
      <Cell $w={40}/>
      <Cell $w={26}>填充:</Cell>
      <Spin>100%<SpinArrow/></Spin>
    </LayerRow>
    <LayerArea>
      <LayerItem>
        <Cell $w={18}><Eye/></Cell>
        <LayerName>
          <svg width="28" height="28" viewBox="0 0 28 28">
            <rect width="28" height="28" fill="#1d3a5a"/>
            <path d="M10 .8 H18 M10 27.200 H18 M.8 10 V18 M27.200 10 V18" stroke="#7fc2ff" strokeWidth="1.400"/>
            <rect x="2" y="2" width="24" height="24" fill="#fff" stroke="#555" strokeWidth=".8"/>
            {[...Array(36)].map((_, i) => (i + Math.floor(i / 6)) % 2 === 0 && (
              <rect key={i} x={3 + (i % 6) * 3.700} y={3 + Math.floor(i / 6) * 3.700} width="3.700" height="3.700" fill="#ccc"/>
            ))}
            <path d="M7.500 8 H15 V12 H7.500 Z M9 17 H20.500 V21 H9 Z" fill="#000"/>
          </svg>
          图层 1
        </LayerName>
      </LayerItem>
      <LayerScroll>
        <Icon w={5} h={3} box="0 0 5 3"><path d="M0 3 L2.500 0 L5 3 Z" fill="#777" stroke="none"/></Icon>
        <Icon w={5} h={3} box="0 0 5 3"><path d="M0 0 L2.500 3 L5 0 Z" fill="#777" stroke="none"/></Icon>
      </LayerScroll>
    </LayerArea>
    <LayerFoot>
      <Cell $w={19}><Icon w={12} h={5} box="0 0 12 5"><rect x=".5" y=".5" width="5" height="4" rx="2" stroke="#777"/><rect x="6.500" y=".5" width="5" height="4" rx="2" stroke="#777"/><path d="M3 2.500 H9" stroke="#777"/></Icon></Cell>
      <Cell $w={20} style={{ font: 'italic 700 10px/10px "Liberation Serif", serif' }}>fx.</Cell>
      <Cell $w={20}><Icon w={10} h={8} box="0 0 10 8"><rect width="10" height="8" fill="#555" stroke="none"/><circle cx="5" cy="4" r="2.500" fill="#fff" stroke="none"/></Icon></Cell>
      <Cell $w={20}><Icon s={9}><circle cx="8" cy="8" r="6.500" fill="#eee"/><path d="M3.500 12.500 A6.500 6.500 0 0 1 12.500 3.500 Z" fill="#222"/></Icon></Cell>
      <Cell $w={20}><Icon w={9} h={7} box="0 0 9 7"><path d="M.5 1 H4 L5 2 H8.500 V6.500 H.5 Z" fill="#eee" stroke="#666" strokeWidth="1"/></Icon></Cell>
      <Cell $w={20}><Icon s={8} box="0 0 8 8"><path d="M.5 .5 H7.500 V7.500 H.5 Z M1 7 V4 H4 V7" fill="#eee" stroke="#555"/></Icon></Cell>
      <Cell $w={20}><Icon s={8} box="0 0 8 8"><path d="M1 2 H7 M3 .8 H5 M1.800 3 L2.300 7.500 H5.700 L6.200 3 M4 3 V7" stroke="#666" strokeWidth="1"/></Icon></Cell>
    </LayerFoot>
  </>
);

const TrayArrow = styled(Cell)`
  flex-direction:column;
  gap:3px;
`;

const Tray = () => (
  <>
    <Cell $w={17}><Icon w={12} h={8} box="0 0 12 8"><rect x=".5" y="2" width="11" height="6" fill="#ccc" stroke="#999" strokeWidth=".8"/><path d="M1.500 4 H11 M1.500 6 H11" stroke="#888" strokeDasharray="1 1" strokeWidth=".8"/></Icon></Cell>
    <Cell $w={16}><Icon s={12}><circle cx="8" cy="8" r="7" fill="#1020b0" stroke="#bcd"/><text x="8" y="12.500" textAnchor="middle" fontSize="12" fontWeight="700" fill="#fff" stroke="none">?</text></Icon></Cell>
    <TrayArrow $w={15}>
      <Icon w={6} h={6} box="0 0 6 6"><path d="M1 2 H4 V0 M2 3 L5 5" stroke="#eee" strokeWidth="1"/></Icon>
      <SmallTri $c="#eee"/>
    </TrayArrow>
    <Cell $w={17}><Icon s={12}><circle cx="8" cy="8" r="7.500" fill="#f5c518" stroke="none"/><path d="M9 2 L9 10 Q9 13 6.500 12.500 Q4 11 7 9 M9 2 L12 4" stroke="#17a35a" strokeWidth="2"/></Icon></Cell>
    <Cell $w={18}><Icon s={13}><circle cx="8" cy="8" r="7" fill="#f6e81c" stroke="none"/><path d="M1 8 Q2 1 8 2 M15 8 Q14 15 8 14" stroke="#1f9a30" strokeWidth="2"/><path d="M8 4 V12 M4 8 H12" stroke="#161" strokeWidth="2.500"/></Icon></Cell>
    <Cell $w={16}><Icon s={11}><rect x="2" y="3" width="8" height="12" stroke="#eee" strokeWidth="2"/><path d="M8 5 V8 H14 V5 M11 9 V14 M9 2 V5 M13 2 V5" stroke="#fff" strokeWidth="2"/></Icon></Cell>
    <Cell $w={20}><Icon w={12} h={8} box="0 0 12 8"><path d="M1 8 V6 M3.500 8 V5 M6 8 V3.500 M8.500 8 V2 M11 8 V0" stroke="#fff" strokeWidth="1.500"/></Icon></Cell>
    <Cell $w={15}><Icon w={10} h={10} box="0 0 10 10"><path d="M0 3 H2.500 L6 0 V10 L2.500 7 H0 Z" fill="#fff" stroke="none"/><path d="M7.500 3 Q9 5 7.500 7" stroke="#ccc"/></Icon></Cell>
    <Cell $w={34}><Icon s={17}><circle cx="8" cy="8" r="7.300" fill="#3f7d50" stroke="#14d868" strokeWidth="1.400"/><text x="8" y="11.200" textAnchor="middle" fontSize="8.500" fontWeight="600" fill="#fff" stroke="none">35</text></Icon></Cell>
  </>
);

const TaskbarBackdrop = () => (
  <Wallpaper width="1000" height="31" viewBox="0 0 1000 31">
    <defs>
      <filter id="soft" x="-5%" y="-50%" width="110%" height="200%"><feGaussianBlur stdDeviation="2"/></filter>
      <linearGradient id="olive" x1="0" x2="1">
        <stop offset="0" stopColor="#6b5b48"/><stop offset=".25" stopColor="#5c5a38"/><stop offset=".6" stopColor="#69663f"/><stop offset="1" stopColor="#55482f"/>
      </linearGradient>
      <linearGradient id="rim" x1="0" x2="0" y1="0" y2="1">
        <stop offset="0" stopColor="#a07c5c" stopOpacity=".9"/><stop offset=".25" stopColor="#a07c5c" stopOpacity="0"/>
      </linearGradient>
    </defs>
    <g filter="url(#soft)">
      <rect x="0" y="-5" width="1000" height="41" fill="#665241"/>
      <rect x="192" y="15" width="26" height="22" fill="#96826c"/>
      <rect x="246" y="10" width="52" height="6" fill="#85705d"/>
      <path d="M294 -2 H397 L380 36 H312 Z" fill="#934649"/>
      <path d="M345 10 L358 30 L385 0 Z" fill="#823c3c"/>
      <path d="M413 -4 H589 L596 36 H424 Z" fill="#dfbfa3"/>
      <path d="M418 2 L445 14 L428 36 L440 36 L450 18 L460 20 V12 Z" fill="#7f6c64"/>
      <path d="M480 0 H496 L516 36 H500 Z" fill="#87756c"/>
      <path d="M572 0 H590 L596 36 H578 Z" fill="#b6978c"/>
      <path d="M589 -4 H718 L703 36 H607 Z" fill="#8e3f41"/>
      <path d="M632 -4 H700 L690 36 H655 Z" fill="#9f5052"/>
      <rect x="722" y="-5" width="280" height="41" fill="url(#olive)"/>
    </g>
    <rect width="1000" height="31" fill="url(#rim)"/>
  </Wallpaper>
);

const App = () => (
  <>
    <GlobalStyle/>
    <Desktop>
      <AppWindow>
        <TopMenu/>
        <ToolOptions/>
        <Workspace>
          <ToolBar/>
          <Document/>
          <Dock>
            <DarkHead><Chevrons back/></DarkHead>
            <DockIcons>
              <Icon s={9} box="0 0 9 9"><path d="M-2 1 Q6 0 6 4 Q6 8 0 8" strokeWidth="2"/></Icon>
              <Icon s={9} box="0 0 9 9"><rect x="-3" y=".5" width="9" height="8"/><path d="M1 4.500 H4 M3 3 V6"/></Icon>
            </DockIcons>
            <DockIcons>
              <Icon s={10} box="0 0 9 9"><path d="M0 0 L5 8 V0" strokeWidth="1.500"/></Icon>
              <Icon s={9} box="0 0 9 9"><path d="M4 0 V9" strokeWidth="2"/></Icon>
            </DockIcons>
          </Dock>
          <Panels>
            <DarkHead $end><Chevrons/></DarkHead>
            <ColorPanel/>
            <DarkGap/>
            <LayersPanel/>
          </Panels>
        </Workspace>
      </AppWindow>

{/* ----------------------TASKBAR------------------------- */}

      <Taskbar>
        <TaskbarBackdrop/>
        <TaskItems>
          <Cell $w={41}>
            <svg width="28" height="28" viewBox="0 0 28 28">
              <defs>
                <radialGradient id="orb" cx=".5" cy=".9" r=".9">
                  <stop offset="0" stopColor="#4fd0f0"/><stop offset=".5" stopColor="#1a6aa8"/><stop offset="1" stopColor="#4f7f9c"/>
                </radialGradient>
              </defs>
              <circle cx="14" cy="14" r="13" fill="url(#orb)" stroke="#27455c"/>
              <path d="M6.500 9 Q10 6.500 13.500 8.500 L12.800 13.500 Q9 12 6 14 Z" fill="#e8622a"/>
              <path d="M14.800 8.800 Q18 10.500 21.500 8.500 L20.500 13.500 Q17 15.500 14 14 Z" fill="#8cc63e"/>
              <path d="M5.800 15.200 Q9 13.300 12.500 14.800 L11.700 20 Q8.500 18.300 5 20 Z" fill="#3f9ce0"/>
              <path d="M13.800 15.200 Q17 17 20.300 15 L19.300 20 Q16 22 13 20.300 Z" fill="#fbc62c"/>
            </svg>
          </Cell>
          <Cell $w={3}/>
          <TaskButton>
            <svg width="24" height="24" viewBox="0 0 24 24">
              <path d="M2 13 Q4 5 13 5 Q20 6 20 12 Q19 21 9 21 Q7 20 9 17 Q9 14 5 16 Q2 17 2 13 Z" fill="#b9dcef" stroke="#6f9cb8" strokeWidth=".7"/>
              <circle cx="6.500" cy="12" r="1.700" fill="#d23"/><circle cx="10" cy="8.500" r="1.700" fill="#2a6"/><circle cx="15" cy="9" r="1.700" fill="#38c"/><circle cx="16" cy="14" r="1.700" fill="#e92"/>
              <path d="M20 4 L13 19 L12 22" stroke="#d08030" strokeWidth="2" fill="none"/><path d="M18 2 L23 1 L22 6 L19 6 Z" fill="#c89050"/>
            </svg>
          </TaskButton>
          <TaskButton>
            <svg width="22" height="22" viewBox="0 0 22 22">
              <circle cx="11" cy="12" r="9.500" fill="#4cc62c" stroke="#eafbe4"/>
              <path d="M5 12.500 H17 Q17 6.500 11 6.500 Q5 7 5 12.500 Q6 18 11 18 Q15 18 16.500 15.500" fill="none" stroke="#fff" strokeWidth="2.600"/>
              <path d="M3 6 Q12 -1 20 2 Q14 3 10 6" fill="#6ad83a"/>
            </svg>
          </TaskButton>
          <TaskButton $on><PsBadge $s={21}>Ps</PsBadge></TaskButton>
          <Fill/>
          <Tray/>
          <Clock>13:41<br/>2018/6/17</Clock>
          <ShowDesktop/>
        </TaskItems>
      </Taskbar>

      <SaveDialog/>

      <Watermark width="190" height="92" viewBox="0 0 190 92" fill="#fff" fillOpacity=".8" stroke="#888" strokeOpacity=".45" strokeWidth=".9" fontFamily="Liberation Sans, Noto Sans CJK SC, sans-serif">
        <text x="4" y="60" fontSize="39" fontWeight="700" textLength="62" lengthAdjust="spacingAndGlyphs">Bai</text>
        <ellipse cx="73" cy="27.500" rx="6.500" ry="8.500"/>
        <ellipse cx="86" cy="14.500" rx="6.200" ry="8.800"/>
        <ellipse cx="101.500" cy="15.500" rx="6.500" ry="8.500" transform="rotate(12 101.500 15.500)"/>
        <ellipse cx="111.500" cy="31" rx="6.500" ry="8.500"/>
        <path d="M92 29 Q98 29 102 35 Q106 41 111 45 Q116 52 112 58 Q108 62 92 60.500 Q78 62 73 58 Q69 52 74 45 Q79 41 82 35 Q86 29 92 29 Z"/>
        <text x="77" y="56.500" fontSize="25" fontWeight="700" fill="#b4b4b4" fillOpacity="1" textLength="31" lengthAdjust="spacingAndGlyphs">du</text>
        <text x="120" y="57" fontSize="30.500" fontWeight="900" fontFamily="Noto Sans CJK SC, sans-serif">经验</text>
        <text x="7" y="83" fontSize="20" textLength="176" stroke="none" fontFamily="Open Sans, sans-serif">jingyan.baidu.com</text>
      </Watermark>
    </Desktop>
  </>
);

export default App;
